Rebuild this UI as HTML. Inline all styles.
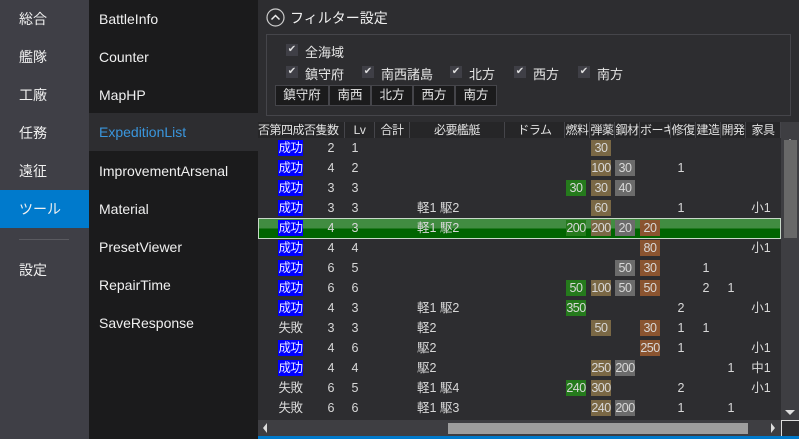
<!DOCTYPE html>
<html><head><meta charset="utf-8"><style>
*{margin:0;padding:0;box-sizing:border-box}
body{width:799px;height:439px;overflow:hidden;background:#2d2d30;font-family:"Liberation Sans","Noto Sans CJK JP",sans-serif;color:#e6e6e6;font-size:13px;position:relative}
.a{position:absolute;white-space:nowrap}
#nav{left:0;top:0;width:89px;height:439px;background:#3f3f46}
#nav div{position:absolute;left:0;width:89px;height:38px;line-height:38px;padding-left:19px;font-size:14px;color:#f0f0f0}
#sub{left:89px;top:0;width:169px;height:439px;background:#1b1b1c}
#sub div{position:absolute;left:0;width:169px;height:38px;line-height:38px;padding-left:10px;font-size:14px;color:#f0f0f0}
.hd{position:absolute;top:122px;height:16px;line-height:16px;font-size:12px;text-align:center;color:#e0e0e0;border-right:1px solid #45454a;background:#262628;white-space:nowrap;overflow:hidden;letter-spacing:-0.5px}
.r{position:absolute;left:258px;width:523px;height:20px}
.c{position:absolute;top:2px;height:16px;line-height:16px;text-align:center;font-size:12.5px;color:#d8d8d8;white-space:nowrap}
.ok{background:#0000ff;color:#e8e8ff;left:20px;width:25px;letter-spacing:-0.5px}
.ng{left:20px;width:25px;letter-spacing:-0.5px}
.f{background:#257a1c;width:20px;letter-spacing:-0.5px}
.m{background:#7a6845;width:20px;letter-spacing:-0.5px}
.s{background:#6b6b6b;width:20px;letter-spacing:-0.5px}
.b{background:#8a5430;width:20px;letter-spacing:-0.5px}
.cb{position:absolute;width:12px;height:12px;background:#3f3f46;color:#ddd;font-size:10px;line-height:12px;text-align:center}
.bt{position:absolute;top:85px;height:21px;line-height:19px;background:#1b1b1c;border:1px solid #45454a;text-align:center;font-size:12.5px;white-space:nowrap}
</style></head><body>
<div id="nav" class="a">
<div style="top:0">総合</div>
<div style="top:38px">艦隊</div>
<div style="top:76px">工廠</div>
<div style="top:114px">任務</div>
<div style="top:152px">遠征</div>
<div style="top:190px;background:#007acc">ツール</div>
<div style="top:251px">設定</div>
<span class="a" style="left:19px;top:239px;width:50px;height:1px;background:#5a5a60"></span>
</div>
<div id="sub" class="a">
<div style="top:0">BattleInfo</div>
<div style="top:38px">Counter</div>
<div style="top:76px">MapHP</div>
<div style="top:113px;background:#2d2d30;color:#3a96dd">ExpeditionList</div>
<div style="top:152px">ImprovementArsenal</div>
<div style="top:190px">Material</div>
<div style="top:228px">PresetViewer</div>
<div style="top:266px">RepairTime</div>
<div style="top:304px">SaveResponse</div>
</div>

<svg class="a" style="left:266px;top:8px" width="19" height="19"><circle cx="9.5" cy="9.5" r="8.5" fill="none" stroke="#ccc" stroke-width="1.2"/><path d="M5.5 11.5 L9.5 7.5 L13.5 11.5" fill="none" stroke="#eee" stroke-width="1.5"/></svg>
<span class="a" style="left:290px;top:8px;font-size:14px;color:#f0f0f0">フィルター設定</span>
<div class="a" style="left:266px;top:34px;width:525px;height:82px;border:1px solid #45454a"></div>
<span class="cb" style="left:286px;top:44px">✔</span><span class="a" style="left:305px;top:42px">全海域</span>
<span class="cb" style="left:286px;top:66px">✔</span><span class="a" style="left:305px;top:64px">鎮守府</span>
<span class="cb" style="left:362px;top:66px">✔</span><span class="a" style="left:381px;top:64px">南西諸島</span>
<span class="cb" style="left:450px;top:66px">✔</span><span class="a" style="left:469px;top:64px">北方</span>
<span class="cb" style="left:514px;top:66px">✔</span><span class="a" style="left:533px;top:64px">西方</span>
<span class="cb" style="left:578px;top:66px">✔</span><span class="a" style="left:597px;top:64px">南方</span>
<div class="bt" style="left:275px;width:54px">鎮守府</div>
<div class="bt" style="left:329px;width:42px">南西</div>
<div class="bt" style="left:371px;width:42px">北方</div>
<div class="bt" style="left:413px;width:42px">西方</div>
<div class="bt" style="left:455px;width:42px">南方</div>

<div class="hd" style="left:258px;width:87px;text-align:left">否第四成否隻数</div>
<div class="hd" style="left:345px;width:30px">Lv</div>
<div class="hd" style="left:375px;width:35px">合計</div>
<div class="hd" style="left:410px;width:95px">必要艦艇</div>
<div class="hd" style="left:505px;width:60px">ドラム</div>
<div class="hd" style="left:565px;width:25px">燃料</div>
<div class="hd" style="left:590px;width:25px">弾薬</div>
<div class="hd" style="left:615px;width:25px">鋼材</div>
<div class="hd" style="left:640px;width:31px">ボーキ</div>
<div class="hd" style="left:671px;width:25px">修復</div>
<div class="hd" style="left:696px;width:25px">建造</div>
<div class="hd" style="left:721px;width:25px">開発</div>
<div class="hd" style="left:746px;width:35px">家具</div>

<div class="r" style="top:138px"><span class="c ok">成功</span><span class="c" style="left:63px;width:20px">2</span><span class="c" style="left:87px;width:20px">1</span><span class="c m" style="left:333px">30</span></div>
<div class="r" style="top:158px"><span class="c ok">成功</span><span class="c" style="left:63px;width:20px">4</span><span class="c" style="left:87px;width:20px">2</span><span class="c m" style="left:333px">100</span><span class="c s" style="left:357px">30</span><span class="c" style="left:413px;width:20px">1</span></div>
<div class="r" style="top:178px"><span class="c ok">成功</span><span class="c" style="left:63px;width:20px">3</span><span class="c" style="left:87px;width:20px">3</span><span class="c f" style="left:308px">30</span><span class="c m" style="left:333px">30</span><span class="c s" style="left:357px">40</span></div>
<div class="r" style="top:198px"><span class="c ok">成功</span><span class="c" style="left:63px;width:20px">3</span><span class="c" style="left:87px;width:20px">3</span><span class="c" style="left:159px">軽1 駆2</span><span class="c m" style="left:333px">60</span><span class="c" style="left:413px;width:20px">1</span><span class="c" style="left:492px;width:22px">小1</span></div>
<div class="r" style="top:218px;height:21px;border:1px solid #c8d8c8;background:linear-gradient(#418c41 0,#418c41 50%,#006400 50%)"><span class="c ok" style="left:19px;top:1px">成功</span><span class="c" style="left:62px;top:1px;width:20px">4</span><span class="c" style="left:86px;top:1px;width:20px">3</span><span class="c" style="left:158px;top:1px">軽1 駆2</span><span class="c f" style="left:307px;top:1px">200</span><span class="c m" style="left:332px;top:1px">200</span><span class="c s" style="left:356px;top:1px">20</span><span class="c b" style="left:381px;top:1px">20</span></div>
<div class="r" style="top:238px"><span class="c ok">成功</span><span class="c" style="left:63px;width:20px">4</span><span class="c" style="left:87px;width:20px">4</span><span class="c b" style="left:382px">80</span><span class="c" style="left:492px;width:22px">小1</span></div>
<div class="r" style="top:258px"><span class="c ok">成功</span><span class="c" style="left:63px;width:20px">6</span><span class="c" style="left:87px;width:20px">5</span><span class="c s" style="left:357px">50</span><span class="c b" style="left:382px">30</span><span class="c" style="left:438px;width:20px">1</span></div>
<div class="r" style="top:278px"><span class="c ok">成功</span><span class="c" style="left:63px;width:20px">6</span><span class="c" style="left:87px;width:20px">6</span><span class="c f" style="left:308px">50</span><span class="c m" style="left:333px">100</span><span class="c s" style="left:357px">50</span><span class="c b" style="left:382px">50</span><span class="c" style="left:438px;width:20px">2</span><span class="c" style="left:463px;width:20px">1</span></div>
<div class="r" style="top:298px"><span class="c ok">成功</span><span class="c" style="left:63px;width:20px">4</span><span class="c" style="left:87px;width:20px">3</span><span class="c" style="left:159px">軽1 駆2</span><span class="c f" style="left:308px">350</span><span class="c" style="left:413px;width:20px">2</span><span class="c" style="left:492px;width:22px">小1</span></div>
<div class="r" style="top:318px"><span class="c ng">失敗</span><span class="c" style="left:63px;width:20px">3</span><span class="c" style="left:87px;width:20px">3</span><span class="c" style="left:159px">軽2</span><span class="c m" style="left:333px">50</span><span class="c b" style="left:382px">30</span><span class="c" style="left:413px;width:20px">1</span><span class="c" style="left:438px;width:20px">1</span></div>
<div class="r" style="top:338px"><span class="c ok">成功</span><span class="c" style="left:63px;width:20px">4</span><span class="c" style="left:87px;width:20px">6</span><span class="c" style="left:159px">駆2</span><span class="c b" style="left:382px">250</span><span class="c" style="left:413px;width:20px">1</span><span class="c" style="left:492px;width:22px">小1</span></div>
<div class="r" style="top:358px"><span class="c ok">成功</span><span class="c" style="left:63px;width:20px">4</span><span class="c" style="left:87px;width:20px">4</span><span class="c" style="left:159px">駆2</span><span class="c m" style="left:333px">250</span><span class="c s" style="left:357px">200</span><span class="c" style="left:463px;width:20px">1</span><span class="c" style="left:492px;width:22px">中1</span></div>
<div class="r" style="top:378px"><span class="c ng">失敗</span><span class="c" style="left:63px;width:20px">6</span><span class="c" style="left:87px;width:20px">5</span><span class="c" style="left:159px">軽1 駆4</span><span class="c f" style="left:308px">240</span><span class="c m" style="left:333px">300</span><span class="c" style="left:413px;width:20px">2</span><span class="c" style="left:492px;width:22px">小1</span></div>
<div class="r" style="top:398px"><span class="c ng">失敗</span><span class="c" style="left:63px;width:20px">6</span><span class="c" style="left:87px;width:20px">6</span><span class="c" style="left:159px">軽1 駆3</span><span class="c m" style="left:333px">240</span><span class="c s" style="left:357px">200</span><span class="c" style="left:413px;width:20px">1</span><span class="c" style="left:463px;width:20px">1</span></div>

<div class="a" style="left:781px;top:122px;width:18px;height:298px;background:#3e3e42"></div>
<svg class="a" style="left:781px;top:136px" width="18" height="10"><path d="M4 8 L9 3 L14 8Z" fill="#ddd"/></svg>
<div class="a" style="left:784px;top:140px;width:13px;height:98px;background:#686868"></div>
<svg class="a" style="left:781px;top:408px" width="18" height="10"><path d="M4 2 L9 7 L14 2Z" fill="#ddd"/></svg>
<div class="a" style="left:258px;top:420px;width:523px;height:16px;background:#3e3e42"></div>
<svg class="a" style="left:260px;top:420px" width="10" height="16"><path d="M7 3 L3 8 L7 13Z" fill="#ddd"/></svg>
<svg class="a" style="left:768px;top:420px" width="10" height="16"><path d="M3 3 L7 8 L3 13Z" fill="#ddd"/></svg>
<div class="a" style="left:448px;top:423px;width:300px;height:11px;background:#9e9e9e"></div>
<div class="a" style="left:781px;top:420px;width:18px;height:16px;border-left:1px solid #ddd;border-top:1px solid #ddd"></div>
<div class="a" style="left:258px;top:436px;width:541px;height:3px;background:#007acc"></div>
</body></html>
